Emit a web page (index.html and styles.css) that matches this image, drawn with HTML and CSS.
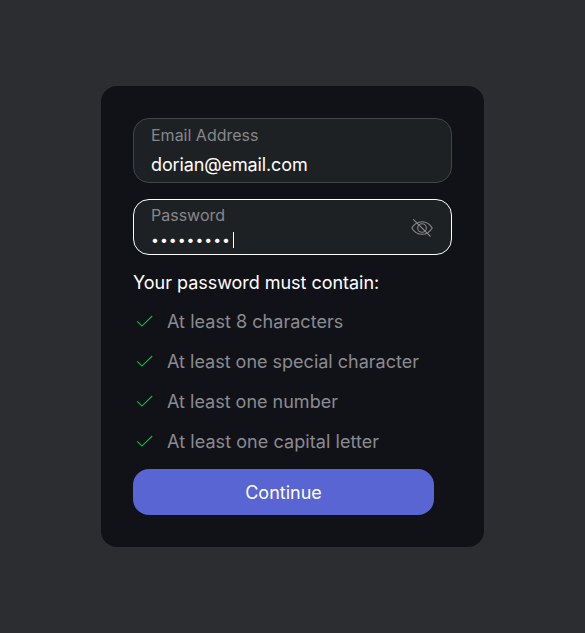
FILE: index.html
```html
<!DOCTYPE html>
<html lang="en">
<head>
<meta charset="utf-8">
<title>Sign up</title>
<link rel="stylesheet" href="styles.css">
</head>
<body>
<main class="card">
  <div class="field">
    <span class="label">Email Address</span>
    <span class="value">dorian@email.com</span>
  </div>
  <div class="field field-active">
    <div class="field-body">
      <span class="label">Password</span>
      <span class="secret"><span class="dots">•••••••••</span><span class="caret"></span></span>
    </div>
    <svg class="eye" viewBox="0 0 24 24"><path d="M1.8 12C4.3 7.7 8 5.7 12 5.7S19.7 7.7 22.2 12C19.7 16.3 16 18.3 12 18.3S4.3 16.3 1.8 12Z"/><circle cx="12" cy="12" r="4.3"/><path d="M3.3 3.3 20.5 20.5"/></svg>
  </div>
  <h1 class="heading">Your password must contain:</h1>
  <ul class="rules">
    <li><svg class="check" viewBox="0 0 24 24"><path d="M4.2 12.4 9 17.1 19.2 7"/></svg>At least 8 characters</li>
    <li><svg class="check" viewBox="0 0 24 24"><path d="M4.2 12.4 9 17.1 19.2 7"/></svg>At least one special character</li>
    <li><svg class="check" viewBox="0 0 24 24"><path d="M4.2 12.4 9 17.1 19.2 7"/></svg>At least one number</li>
    <li><svg class="check" viewBox="0 0 24 24"><path d="M4.2 12.4 9 17.1 19.2 7"/></svg>At least one capital letter</li>
  </ul>
  <button class="submit">Continue</button>
</main>
</body>
</html>
```
FILE: styles.css
```css
* { box-sizing: border-box; }
body {
  margin: 0;
  height: 633px;
  padding: 86px 0 0 101px;
  background: #2c2d30;
  color: #fff;
  font: 400 18px/24px Inter, "Liberation Sans", sans-serif;
}
.card {
  width: 383px;
  height: 461px;
  padding: 32px;
  border-radius: 16px;
  background: #111218;
}
.field {
  display: flex;
  flex-direction: column;
  height: 65px;
  padding: 6px 17px 0;
  border: 1px solid #434446;
  border-radius: 16px;
  background: #1e2124;
}
.label {
  font-size: 16px;
  line-height: 20px;
  color: #86878b;
}
.value {
  margin-top: 8px;
  letter-spacing: -0.12px;
}
.field-active {
  flex-direction: row;
  justify-content: space-between;
  height: 56px;
  margin-top: 16px;
  padding-top: 5px;
  border-color: #fff;
}
.field-body {
  display: flex;
  flex-direction: column;
}
.secret {
  display: flex;
  align-items: center;
  height: 16px;
  margin-top: 7px;
}
.dots {
  font-size: 14px;
  line-height: 16px;
  letter-spacing: 1px;
}
.caret {
  width: 1px;
  height: 16px;
  margin-left: 2px;
  background: #fff;
}
.eye {
  width: 24px;
  height: 24px;
  margin: 10.5px 0 0;
  fill: none;
  stroke: #86878b;
  stroke-width: 1.1;
}
.heading {
  margin: 16px 0 7px;
  font-size: 18px;
  font-weight: 400;
  line-height: 24px;
  letter-spacing: -0.03px;
}
.rules {
  margin: 0;
  padding: 0;
  list-style: none;
  color: #8a8b8f;
}
.rules li {
  display: flex;
  align-items: center;
  gap: 10px;
  height: 40px;
}
.rules li:first-child { letter-spacing: 0.04px; }
.rules li:last-child { letter-spacing: 0.07px; }
.check {
  width: 24px;
  height: 24px;
  margin-top: -2px;
  fill: none;
  stroke: #0fbd3c;
  stroke-width: 1.1;
}
.submit {
  display: block;
  width: 301px;
  height: 46px;
  margin: 7px 0 0;
  padding: 2px 0 0;
  border: 0;
  border-radius: 16px;
  background: #5865d2;
  color: #fff;
  font: inherit;
}
```
